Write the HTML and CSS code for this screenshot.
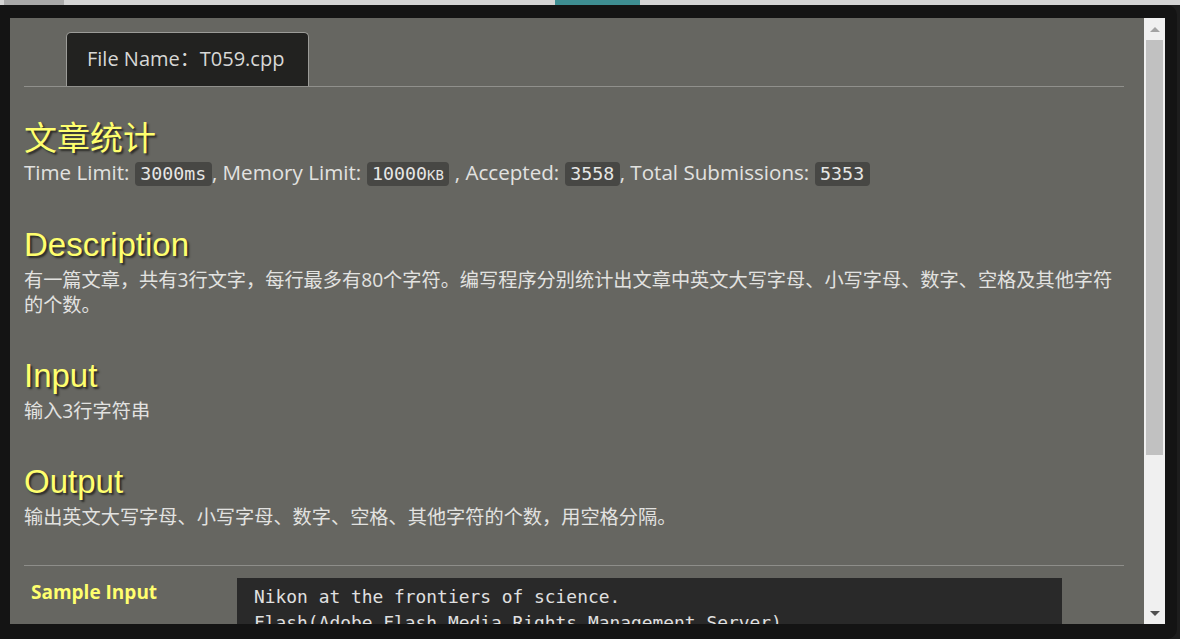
FILE: index.html
```html
<!DOCTYPE html>
<html lang="zh-CN">
<head>
<meta charset="utf-8">
<title>T059</title>
<link rel="stylesheet" href="styles.css">
</head>
<body>
<div class="backdrop">
  <span class="bd-mark"></span>
  <span class="bd-teal"></span>
</div>
<div class="modal">
  <div class="window">
    <div class="content">
      <div class="tabs">
        <div class="tab">File Name：T059.cpp</div>
      </div>
      <h1 class="title">文章统计</h1>
      <p class="stats">Time Limit: <code>3000ms</code>, Memory Limit: <code>10000<span class="unit">KB</span></code> , Accepted: <code>3558</code>, Total Submissions: <code>5353</code></p>

      <section class="section">
        <h2>Description</h2>
        <p>有一篇文章，共有3行文字，每行最多有80个字符。编写程序分别统计出文章中英文大写字母、小写字母、数字、空格及其他字符的个数。</p>
      </section>
      <section class="section">
        <h2>Input</h2>
        <p>输入3行字符串</p>
      </section>
      <section class="section">
        <h2>Output</h2>
        <p>输出英文大写字母、小写字母、数字、空格、其他字符的个数，用空格分隔。</p>
      </section>

      <div class="rule"></div>

      <div class="sample">
        <div class="sample-label">Sample Input</div>
        <pre class="sample-code">Nikon at the frontiers of science.
Flash(Adobe Flash Media Rights Management Server)
Apple iPhone 4S</pre>
      </div>
    </div>
    <div class="scrollbar">
      <div class="sb-btn sb-up"><span class="arrow-up"></span></div>
      <div class="sb-thumb"></div>
      <div class="sb-rest"></div>
      <div class="sb-btn sb-down"><span class="arrow-down"></span></div>
    </div>
  </div>
</div>
</body>
</html>
```

FILE: styles.css
```css
html, body {
  margin: 0;
  padding: 0;
}
body {
  width: 1180px;
  height: 639px;
  overflow: hidden;
  background: #1d1d1d;
  font-family: "Open Sans", "Noto Sans CJK SC", sans-serif;
}
.backdrop {
  height: 5px;
  background: #d4d4d4;
  display: flex;
  align-items: stretch;
}
.bd-mark {
  width: 60px;
  margin-left: 4px;
  background: #a8a8a8;
}
.bd-teal {
  width: 85px;
  margin-left: 491px;
  background: #3e8e92;
}
.modal {
  width: 1177px;
  height: 634px;
  box-sizing: border-box;
  padding: 13px 12px 15px 10px;
  background: #141414;
  border-radius: 0 10px 10px 0;
}
.window {
  display: flex;
  height: 606px;
}
.content {
  flex: 1;
  overflow: hidden;
  background: #666661;
  padding: 14px 20px 0 14px;
  color: #e2e2e0;
  font-size: 19.2px;
}
.tabs {
  border-bottom: 1px solid #90908c;
  padding-left: 42px;
  display: flex;
}
.tab {
  height: 53px;
  line-height: 51px;
  padding: 0 24px 0 20px;
  background: #222220;
  border: 1px solid #9c9c98;
  border-bottom: none;
  border-radius: 5px 5px 0 0;
  color: #d8d8d6;
  font-size: 20px;
}
.title, .section h2 {
  margin: 0;
  font-family: "Liberation Sans", "Noto Sans CJK SC", sans-serif;
  font-weight: normal;
  font-size: 33px;
  line-height: 38px;
  color: #ffff6e;
  text-shadow: 2px 2px 2px #2a2a26;
}
.title {
  margin-top: 33px;
}
.stats {
  margin: 2px 0 0;
  line-height: 25px;
  font-size: 20.6px;
}
code {
  font-family: "DejaVu Sans Mono", monospace;
  font-size: 18.3px;
  background: #474744;
  color: #e6e6e4;
  border-radius: 4px;
  padding: 1px 5.5px 2px;
}
.unit {
  font-size: 14px;
}
.section {
  margin-top: 40px;
}
.section:first-of-type {
  margin-top: 38px;
}
.section p {
  margin: 3px 0 0;
  line-height: 25px;
}
.rule {
  height: 1px;
  background: #8e8e8a;
  margin-top: 36px;
}
.sample {
  display: flex;
  margin-top: 12px;
}
.sample-label {
  width: 213px;
  box-sizing: border-box;
  padding: 2px 0 0 7px;
  font-weight: bold;
  font-size: 19px;
  line-height: 24px;
  color: #ffff6e;
}
.sample-code {
  margin: 0;
  width: 825px;
  box-sizing: border-box;
  padding: 6px 17px;
  background: #292929;
  color: #e0e0e0;
  font-family: "DejaVu Sans Mono", monospace;
  font-size: 17.9px;
  line-height: 26px;
}
.scrollbar {
  width: 21px;
  background: #f0f0f0;
  display: flex;
  flex-direction: column;
}
.sb-btn {
  height: 22px;
  display: flex;
  align-items: center;
  justify-content: center;
}
.arrow-up {
  width: 0;
  height: 0;
  border-left: 5px solid transparent;
  border-right: 5px solid transparent;
  border-bottom: 5px solid #a3a3a3;
}
.arrow-down {
  width: 0;
  height: 0;
  border-left: 5px solid transparent;
  border-right: 5px solid transparent;
  border-top: 5px solid #505050;
}
.sb-thumb {
  height: 415px;
  margin: 0 2px;
  background: #c1c1c1;
}
.sb-rest {
  flex: 1;
}
```
